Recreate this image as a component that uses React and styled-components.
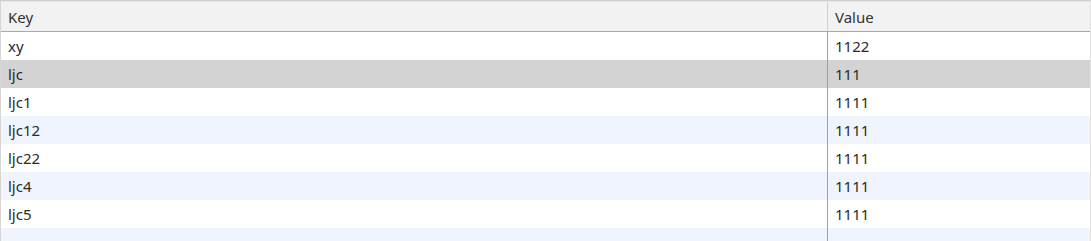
import React from "react";
import styled, { createGlobalStyle } from "styled-components";

const Global = createGlobalStyle`
  html, body { margin: 0; padding: 0; background: #ffffff; }
  body { font-family: "Noto Sans", "Open Sans", sans-serif; }
`;

const Grid = styled.div`
  width: 1091px;
  height: 241px;
  box-sizing: border-box;
  border-top: 1px solid #cfcfcf;
  border-left: 1px solid #d6d6d6;
  border-right: 1px solid #e3e3e3;
  overflow: hidden;
  display: flex;
  flex-direction: column;
  position: relative;
`;

const Header = styled.div`
  display: grid;
  grid-template-columns: 826px 1fr;
  height: 29px;
  flex: none;
  background: #f2f2f2;
  border-top: 1px solid #e6e6e6;
  border-bottom: 1px solid #a9a9a9;
`;

const HeaderCell = styled.div`
  display: flex;
  align-items: center;
  padding-left: 7px;
  font-size: 15px;
  color: #333333;
  border-left: ${(p) => (p.$first ? "none" : "1px solid #cfcfcf")};
`;

const Row = styled.div`
  display: grid;
  grid-template-columns: 826px 1fr;
  height: 28px;
  flex: none;
  background: ${(p) => (p.$selected ? "#d3d3d3" : p.$alt ? "#f0f5fd" : "#ffffff")};
`;

const Cell = styled.div`
  display: flex;
  align-items: center;
  padding-left: 7px;
  font-size: 15px;
  color: #2b2b2b;
  white-space: nowrap;
  border-left: ${(p) => (p.$first ? "none" : "1px solid #a0a0a0")};
`;

const rows = [
  ["xy", "1122"],
  ["ljc", "111"],
  ["ljc1", "1111"],
  ["ljc12", "1111"],
  ["ljc22", "1111"],
  ["ljc4", "1111"],
  ["ljc5", "1111"],
  ["", ""],
];

export default function App() {
  return (
    <>
      <Global />
      <Grid>
        <Header>
          <HeaderCell $first>Key</HeaderCell>
          <HeaderCell>Value</HeaderCell>
        </Header>
        {rows.map(([k, v], i) => (
          <Row key={i} $selected={i === 1} $alt={i % 2 === 1}>
            <Cell $first>{k}</Cell>
            <Cell>{v}</Cell>
          </Row>
        ))}
      </Grid>
    </>
  );
}
